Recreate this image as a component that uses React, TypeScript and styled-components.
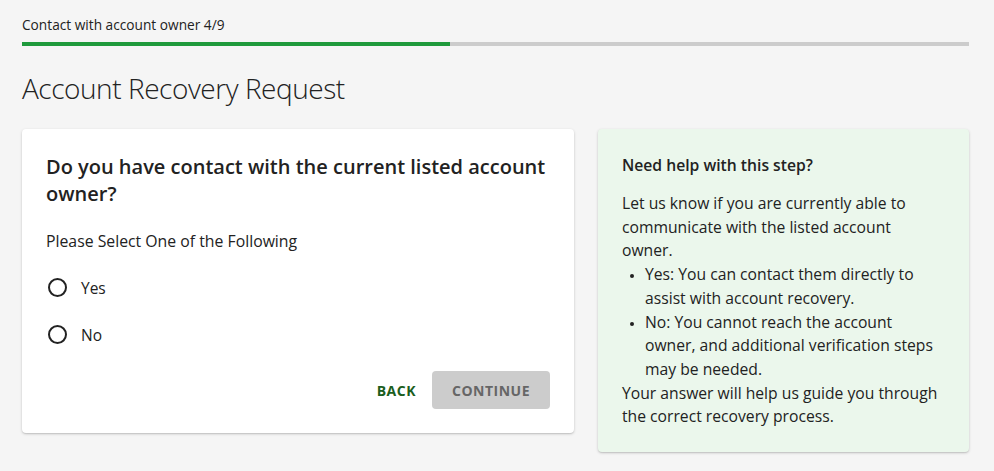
import * as React from "react";
import styled, { createGlobalStyle } from "styled-components";

const GlobalStyle = createGlobalStyle`
  body {
    margin: 0;
    background: #f5f5f5;
    font-family: "Open Sans", "Noto Sans", sans-serif;
    color: #212121;
  }
  * {
    box-sizing: border-box;
  }
`;

const options = ["Yes", "No"];

const App: React.FC = () => (
  <>
    <GlobalStyle />
    <Page>
      <StepLabel>Contact with account owner 4/9</StepLabel>
      <ProgressTrack>
        <ProgressFill style={{ width: `${(4 / 9) * 100 + 0.8}%` }} />
      </ProgressTrack>
      <Title>Account Recovery Request</Title>
      <Columns>
        <QuestionCard>
          <Question>Do you have contact with the current listed account owner?</Question>
          <Hint>Please Select One of the Following</Hint>
          <RadioGroup>
            {options.map((opt) => (
              <RadioRow key={opt}>
                <RadioCircle />
                <RadioLabel>{opt}</RadioLabel>
              </RadioRow>
            ))}
          </RadioGroup>
          <Actions>
            <BackButton>BACK</BackButton>
            <ContinueButton disabled>CONTINUE</ContinueButton>
          </Actions>
        </QuestionCard>
        <HelpCard>
          <HelpTitle>Need help with this step?</HelpTitle>
          <HelpText>
            Let us know if you are currently able to communicate with the listed
            account owner.
            <HelpList>
              <li>Yes: You can contact them directly to assist with account recovery.</li>
              <li>
                No: You cannot reach the account owner, and additional verification
                steps may be needed.
              </li>
            </HelpList>
            Your answer will help us guide you through the correct recovery process.
          </HelpText>
        </HelpCard>
      </Columns>
    </Page>
  </>
);

export default App;

const Page = styled.div`
  padding: 16px 25px 20px 22px;
`;

const StepLabel = styled.div`
  font-size: 13.7px;
  line-height: 18px;
  color: #222;
`;

const ProgressTrack = styled.div`
  margin-top: 8px;
  height: 4px;
  background: #cccccc;
  width: 100%;
`;

const ProgressFill = styled.div`
  height: 100%;
  background: #1f9a3c;
`;

const Title = styled.h1`
  margin: 25px 0 0;
  font-size: 28px;
  line-height: 34px;
  font-weight: 300;
  color: #222;
  letter-spacing: -0.45px;
`;

const Columns = styled.div`
  margin-top: 24px;
  display: grid;
  grid-template-columns: 552fr 371fr;
  gap: 24px;
  align-items: start;
`;

const Card = styled.section`
  border-radius: 4px;
  box-shadow: 0 1px 3px rgba(0, 0, 0, 0.18), 0 1px 1px rgba(0, 0, 0, 0.08);
`;

const QuestionCard = styled(Card)`
  background: #fff;
  padding: 24px;
`;

const Question = styled.h2`
  margin: 0;
  font-size: 20px;
  line-height: 27px;
  font-weight: 600;
  color: #222;
`;

const Hint = styled.p`
  margin: 23px 0 0;
  font-size: 15.8px;
  line-height: 22px;
  color: #222;
`;

const RadioGroup = styled.div`
  margin-top: 12px;
  display: flex;
  flex-direction: column;
`;

const RadioRow = styled.label`
  display: flex;
  align-items: center;
  height: 47px;
  gap: 14px;
  cursor: pointer;
`;

const RadioCircle = styled.span`
  width: 19px;
  height: 19px;
  margin-left: 2px;
  border: 2px solid #222;
  border-radius: 50%;
`;

const RadioLabel = styled.span`
  font-size: 15.5px;
  color: #222;
`;

const Actions = styled.div`
  margin-top: 13px;
  display: flex;
  justify-content: flex-end;
  align-items: center;
  gap: 8px;
`;

const ButtonBase = styled.button`
  font-family: "Open Sans", "Noto Sans", sans-serif;
  font-size: 14px;
  font-weight: 700;
  letter-spacing: 0.5px;
  border: none;
  border-radius: 4px;
  height: 38px;
  cursor: pointer;
`;

const BackButton = styled(ButtonBase)`
  background: transparent;
  color: #1b5e20;
  padding: 0 8px;
`;

const ContinueButton = styled(ButtonBase)`
  background: #cccccc;
  color: #666;
  width: 118px;
  cursor: default;
`;

const HelpCard = styled(Card)`
  background: #ebf7ec;
  padding: 24px 28px 23px 24px;
`;

const HelpTitle = styled.h3`
  margin: 0;
  font-size: 15.7px;
  line-height: 24px;
  font-weight: 600;
  color: #222;
`;

const HelpText = styled.div`
  margin-top: 15px;
  font-size: 15.7px;
  line-height: 23.7px;
  color: #222;
`;

const HelpList = styled.ul`
  margin: 0;
  padding-left: 23px;
  li::marker {
    font-size: 11px;
  }
`;
